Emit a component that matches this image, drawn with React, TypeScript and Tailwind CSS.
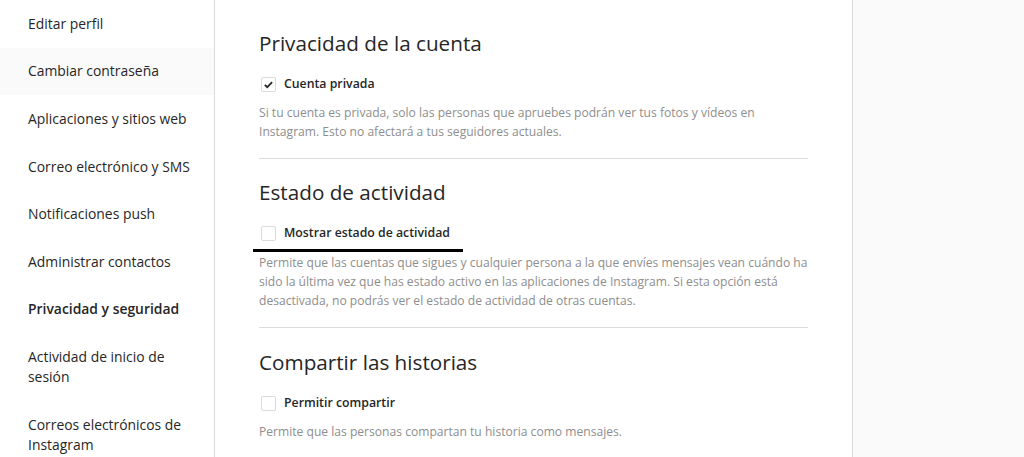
const NAV = [
  'Editar perfil',
  'Cambiar contraseña',
  'Aplicaciones y sitios web',
  'Correo electrónico y SMS',
  'Notificaciones push',
  'Administrar contactos',
  'Privacidad y seguridad',
  'Actividad de inicio de sesión',
  'Correos electrónicos de Instagram',
];

function Check({ checked }: { checked?: boolean }) {
  return (
    <span className="flex h-[15px] w-[15px] shrink-0 items-center justify-center rounded-[2px] border border-[#dbdbdb] bg-white">
      {checked && (
        <svg viewBox="0 0 12 12" className="h-[11px] w-[11px]">
          <path d="M2 6.3l2.6 2.6L10 3.4" fill="none" stroke="#262626" strokeWidth="1.9" />
        </svg>
      )}
    </span>
  );
}

function Section({
  title,
  label,
  checked,
  marked,
  children,
}: {
  title: string;
  label: string;
  checked?: boolean;
  marked?: boolean;
  children: React.ReactNode;
}) {
  return (
    <div>
      <h2 className="text-[20.7px] leading-[26px] font-normal text-[#262626]">{title}</h2>
      <div className="relative mt-[18px] flex h-5 items-center gap-[8px] pl-[2px]">
        <Check checked={checked} />
        <span className="text-[12.3px] font-semibold text-[#262626]">{label}</span>
        {/* marca negra que subraya la opción */}
        {marked && <span className="absolute top-[26px] -left-[6px] h-[3px] w-[210px] bg-black" />}
      </div>
      <p className={`${marked ? 'mt-[10px]' : 'mt-[9px]'} text-[12.1px] leading-[19px] text-[#8e8e8e]`}>{children}</p>
    </div>
  );
}

export default function App() {
  return (
    <div className="flex h-[457px] w-[1024px] overflow-hidden bg-[#fafafa]" style={{ fontFamily: '"Open Sans", "Noto Sans", sans-serif' }}>
      <nav className="w-[215px] shrink-0 border-r border-[#dbdbdb] bg-white">
        {NAV.map((item, i) => (
          <div
            key={item}
            className={`py-[13.8px] pr-3 pl-7 text-[13.9px] leading-5 text-[#262626] ${i === 1 ? 'bg-[#fafafa]' : ''} ${i === 6 ? 'font-semibold' : ''}`}
          >
            {item}
          </div>
        ))}
      </nav>
      <main className="w-[638px] shrink-0 border-r border-[#dbdbdb] bg-white px-[44px] pt-[30px]">
        <Section title="Privacidad de la cuenta" label="Cuenta privada" checked>
          Si tu cuenta es privada, solo las personas que apruebes podrán ver tus fotos y vídeos en Instagram. Esto no afectará a tus seguidores actuales.
        </Section>
        <div className="mt-[17px] mb-[20px] h-px bg-[#dbdbdb]" />
        <Section title="Estado de actividad" label="Mostrar estado de actividad" marked>
          Permite que las cuentas que sigues y cualquier persona a la que envíes mensajes vean cuándo ha sido la última vez que has estado activo en las aplicaciones de Instagram. Si esta opción está desactivada, no podrás ver el estado de actividad de otras cuentas.
        </Section>
        <div className="mt-[17px] mb-[21px] h-px bg-[#dbdbdb]" />
        <Section title="Compartir las historias" label="Permitir compartir">
          Permite que las personas compartan tu historia como mensajes.
        </Section>
      </main>
    </div>
  );
}
